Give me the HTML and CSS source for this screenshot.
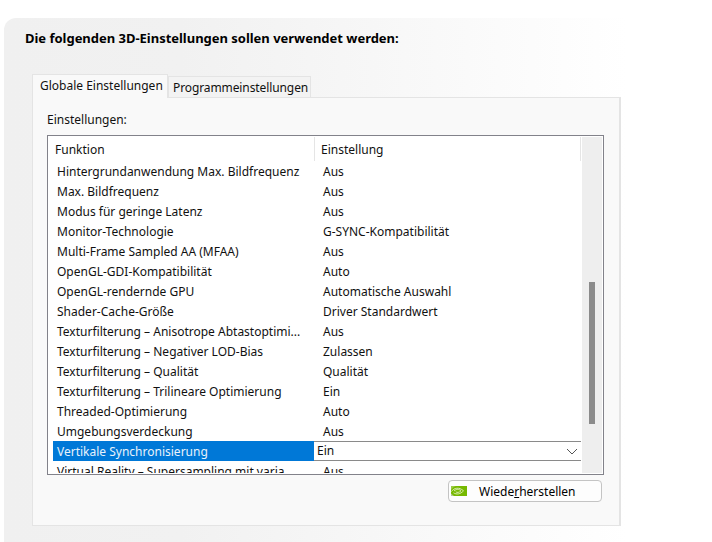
FILE: index.html
```html
<!DOCTYPE html>
<html lang="de">
<head>
<meta charset="utf-8">
<title>3D-Einstellungen</title>
<link rel="stylesheet" href="styles.css">
</head>
<body>
<main class="page">
  <h1 class="title">Die folgenden 3D-Einstellungen sollen verwendet werden:</h1>
  <div class="tabs">
    <div class="tab tab-active">Globale Einstellungen</div>
    <div class="tab tab-other">Programmeinstellungen</div>
  </div>
  <section class="tabpanel">
    <div class="label">Einstellungen:</div>
    <div class="listbox">
      <div class="listmain">
        <div class="head">
          <div class="head-a">Funktion</div>
          <div class="head-b">Einstellung</div>
        </div>
        <div class="rows">
          <div class="row"><span class="n">Hintergrundanwendung Max. Bildfrequenz</span><span class="v">Aus</span></div>
          <div class="row"><span class="n">Max. Bildfrequenz</span><span class="v">Aus</span></div>
          <div class="row"><span class="n">Modus für geringe Latenz</span><span class="v">Aus</span></div>
          <div class="row"><span class="n">Monitor-Technologie</span><span class="v">G-SYNC-Kompatibilität</span></div>
          <div class="row"><span class="n">Multi-Frame Sampled AA (MFAA)</span><span class="v">Aus</span></div>
          <div class="row"><span class="n">OpenGL-GDI-Kompatibilität</span><span class="v">Auto</span></div>
          <div class="row"><span class="n">OpenGL-rendernde GPU</span><span class="v">Automatische Auswahl</span></div>
          <div class="row"><span class="n">Shader-Cache-Größe</span><span class="v">Driver Standardwert</span></div>
          <div class="row"><span class="n">Texturfilterung – Anisotrope Abtastoptimi...</span><span class="v">Aus</span></div>
          <div class="row"><span class="n">Texturfilterung – Negativer LOD-Bias</span><span class="v">Zulassen</span></div>
          <div class="row"><span class="n">Texturfilterung – Qualität</span><span class="v">Qualität</span></div>
          <div class="row"><span class="n">Texturfilterung – Trilineare Optimierung</span><span class="v">Ein</span></div>
          <div class="row"><span class="n">Threaded-Optimierung</span><span class="v">Auto</span></div>
          <div class="row"><span class="n">Umgebungsverdeckung</span><span class="v">Aus</span></div>
          <div class="row row-selected">
            <span class="n">Vertikale Synchronisierung</span>
            <span class="combo">Ein
              <svg class="chevron" width="12" height="7" viewBox="0 0 12 7" aria-hidden="true"><path d="M1 1l5 5 5-5" fill="none" stroke="#555" stroke-width="1"/></svg>
            </span>
          </div>
          <div class="row"><span class="n">Virtual Reality – Supersampling mit varia...</span><span class="v">Aus</span></div>
        </div>
      </div>
      <div class="scrollbar"><div class="thumb"></div></div>
    </div>
    <div class="actions">
      <button class="btn" type="button">
        <svg class="logo" width="16" height="10" viewBox="0 0 16 10" aria-hidden="true">
          <rect width="16" height="10" fill="#76b900"/>
          <path d="M0 0H5C2.500 1 1 2.500 0 4Z" fill="#9ccb45"/>
          <path d="M0 10V7.500L3 10Z" fill="#b5c99a"/>
          <g fill="none" stroke="#d9ebb0" stroke-width="1">
            <path d="M0.500 5.500C3 1.800 8 0.800 12.500 4.800 9.500 8.200 5.500 8.800 2.500 6.800"/>
            <path d="M3 5C5.500 2.800 8 3 10 4.800 8 6.700 6 6.800 4.800 5.800"/>
          </g>
        </svg>
        <span class="btn-text">Wiede<u>r</u>herstellen</span>
      </button>
    </div>
  </section>
</main>
</body>
</html>
```
FILE: styles.css
```css
* { box-sizing: border-box; }
html, body { margin: 0; height: 100%; background: #fff; }
body {
  padding: 18px 0 0 4px;
  overflow: hidden;
  font-family: "Noto Sans", "Open Sans", sans-serif;
  font-size: 12px;
  color: #111;
}
.page {
  height: 524px;
  padding: 12px 0 0 20px;
  border-top-left-radius: 12px;
  background: linear-gradient(90deg, #f0f0f0 0%, #f1f1f1 25%, #fbfbfb 70%, #fff 88%);
}
.title {
  margin: 0 0 0 1px;
  height: 16px;
  font-size: 13px;
  line-height: 16px;
  font-weight: 700;
  letter-spacing: -0.02px;
  color: #000;
}
.tabs {
  display: flex;
  align-items: flex-end;
  height: 23px;
  margin: 28px 0 0 8px;
}
.tab {
  position: relative;
  height: 21px;
  display: flex;
  align-items: center;
  border: 1px solid #e4e4e4;
  border-bottom: 0;
  background: #f3f3f3;
}
.tab-other {
  width: 143px;
  padding-left: 4px;
  letter-spacing: -0.1px;
}
.tab-active {
  width: 136px;
  height: 24px;
  padding: 0 0 3px 7px;
  margin-bottom: -1px;
  z-index: 1;
  background: #f9f9f9;
}
.tabpanel {
  width: 589px;
  height: 429px;
  margin-left: 8px;
  padding: 14px 14px 0;
  background: #f9f9f9;
  border: 1px solid #e4e4e4;
  border-right-width: 2px;
}
.label { height: 16px; line-height: 16px; }
.listbox {
  display: flex;
  width: 557px;
  height: 340px;
  margin-top: 7px;
  padding: 1px;
  border: 1px solid #82828a;
  background: #fff;
}
.listmain {
  flex: 1;
  min-width: 0;
  display: flex;
  flex-direction: column;
  overflow: hidden;
}
.head {
  display: flex;
  flex: none;
  height: 24px;
  margin-right: 1px;
  padding-left: 6px;
}
.head-a { width: 259px; padding-top: 1px; line-height: 24px; }
.head-b {
  flex: 1;
  padding: 1px 0 0 6px;
  line-height: 24px;
  border-left: 1px solid #e5e5e5;
  border-right: 1px solid #e5e5e5;
}
.rows { flex: 1; overflow: hidden; padding: 0 1px 0 4px; }
.row { display: flex; height: 20px; line-height: 22px; white-space: nowrap; }
.n { width: 261px; flex: none; padding-left: 4px; overflow: hidden; }
.v { padding-left: 9px; }
.row-selected { color: #fff; }
.row-selected .n { background: #0078d7; color: #e8f2fb; }
.combo {
  flex: 1;
  display: flex;
  align-items: center;
  justify-content: space-between;
  padding: 0 3px 0 3px;
  line-height: 20px;
  color: #111;
  background: #fff;
  border: 1px solid #8a8a8a;
  border-width: 1px 0;
}
.chevron { flex: none; }
.scrollbar {
  flex: none;
  width: 20px;
  padding: 145px 7px 0;
  background: #eee;
}
.thumb { width: 6px; height: 142px; background: #8b8b8b; }
.actions {
  display: flex;
  justify-content: flex-end;
  padding: 5px 3px 0 0;
}
.btn {
  display: flex;
  align-items: center;
  width: 154px;
  height: 22px;
  padding: 0 0 0 2px;
  font: inherit;
  color: #000;
  background: #fdfdfd;
  border: 1px solid #c4c4c4;
  border-radius: 4px;
}
.btn-text { margin-left: 12px; }
.logo { flex: none; }
```
